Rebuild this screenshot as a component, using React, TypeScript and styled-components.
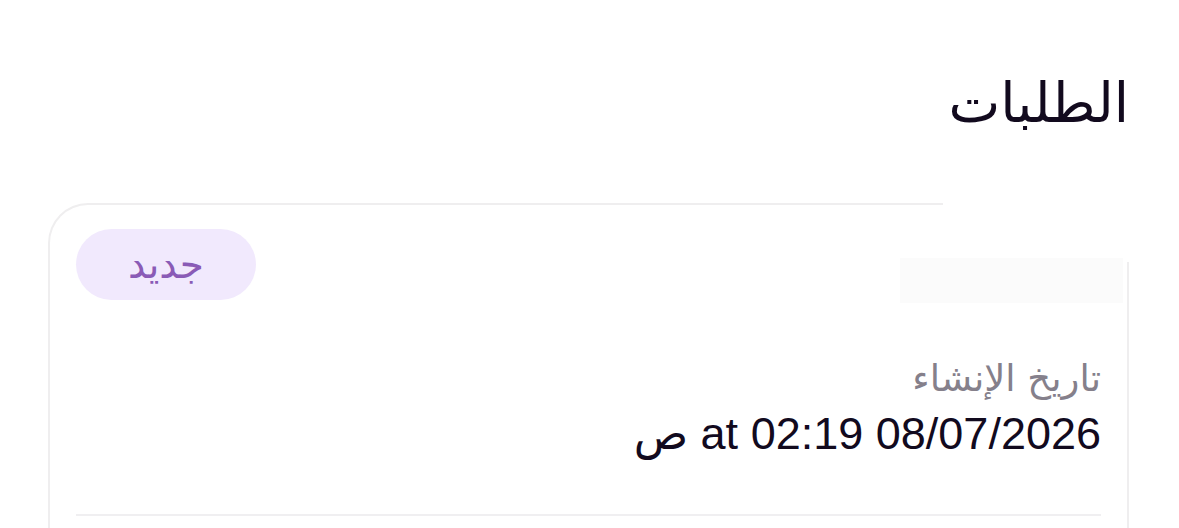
import React from "react";
import styled, { createGlobalStyle } from "styled-components";

const GlobalStyle = createGlobalStyle`
  html, body {
    margin: 0;
    padding: 0;
    background: #ffffff;
  }
  body {
    font-family: "Liberation Sans", "DejaVu Sans", sans-serif;
    color: #120a1e;
  }
`;

const Page = styled.main`
  direction: rtl;
  padding: 67px 50px 0 48px;
  height: 528px;
  box-sizing: border-box;
  overflow: hidden;
`;

const Title = styled.h1`
  margin: 0 0 64px;
  font-family: "DejaVu Sans", sans-serif;
  font-size: 55px;
  font-weight: 400;
  line-height: 72px;
  color: #120a1e;
`;

const Card = styled.section`
  position: relative;
  border: 2px solid #efeeef;
  border-bottom: none;
  border-radius: 40px 40px 0 0;
  padding: 24px 26px 0;
  min-height: 400px;
`;

/* white patch hiding the top-right corner of the card outline */
const CornerMask = styled.div`
  position: absolute;
  top: -3px;
  right: -3px;
  width: 187px;
  height: 60px;
  background: #ffffff;
`;

const TopRow = styled.div`
  display: flex;
  justify-content: space-between;
  align-items: flex-start;
`;

const Placeholder = styled.div`
  position: relative;
  width: 223px;
  height: 45px;
  margin-top: 29px;
  margin-right: -22px;
  background: #fbfbfb;
`;

const Badge = styled.span`
  display: inline-flex;
  align-items: center;
  justify-content: center;
  width: 180px;
  height: 71px;
  border-radius: 36px;
  background: #f1e9fd;
  color: #8a5bb6;
  font-family: "DejaVu Sans", sans-serif;
  font-size: 39px;
`;

const Field = styled.div`
  margin-top: 52px;
  padding-bottom: 52px;
  border-bottom: 2px solid #f0eff1;
`;

const Label = styled.div`
  font-family: "DejaVu Sans", sans-serif;
  font-size: 37px;
  color: #85808b;
  line-height: 48px;
`;

const Value = styled.div`
  margin-top: 3px;
  font-size: 45px;
  line-height: 56px;
  color: #120a1e;
`;

export default function App() {
  return (
    <>
      <GlobalStyle />
      <Page>
        <Title>الطلبات</Title>
        <Card>
          <CornerMask />
          <TopRow>
            <Placeholder />
            <Badge>جديد</Badge>
          </TopRow>
          <Field>
            <Label>تاريخ الإنشاء</Label>
            <Value>08/07/2026 at 02:19 ص</Value>
          </Field>
        </Card>
      </Page>
    </>
  );
}
